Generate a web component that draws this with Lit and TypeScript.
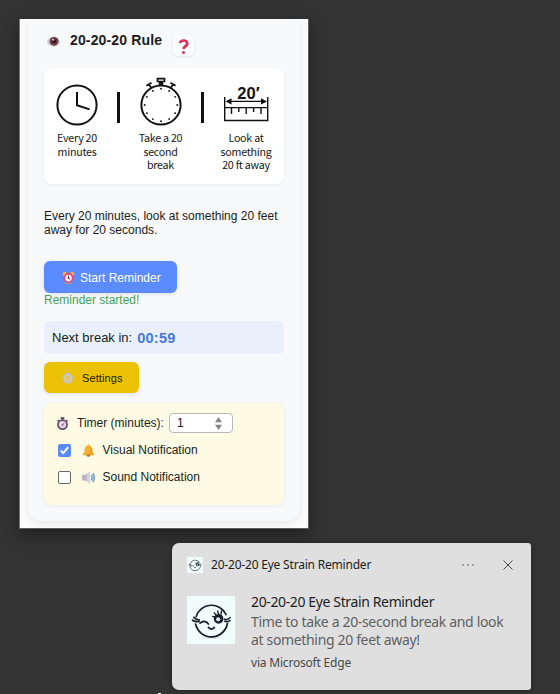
import { LitElement, html, css, svg } from "lit";
import { customElement, property, state } from "lit/decorators.js";

@customElement("wink-face")
class WinkFace extends LitElement {
  static styles = css`
    :host { display: block; flex: none; background: #f1fcfd; }
    svg { display: block; width: 100%; height: 100%; }
  `;
  render() {
    return html`<svg viewBox="0 0 48 48" fill="none" stroke="#17202a" stroke-width="1.7" stroke-linecap="round">
      <ellipse cx="24" cy="41.8" rx="10" ry=".6" fill="#c9d3d6" stroke="none" />
      <path d="M9.2 20.5A16 16 0 0 1 39 18.5M40.4 27.5A16.2 16.2 0 0 1 8.6 28" />
      <path d="M5.500 24.200q3 2 6.500 1.200M6.800 21.400q2.300 2.600 5.500 2.600" />
      <path d="M13 27.200q4.600-4 8.400.8" />
      <path d="M21.4 31.4q3 3.6 6 0" />
      <path d="M27.300 16.800l1.800 2.400M30.800 15l.5 3M34.600 15l-.6 3M25.600 20.400l2.200.8" stroke-width="1.4" />
      <circle cx="31.6" cy="22.8" r="3.700" stroke-width="2.300" fill="#17202a" />
      <circle cx="31.200" cy="23.300" r="2.100" fill="#dbe8ea" stroke="none" />
      <path d="M37.500 23.200q3 1.400 5.700-1.700M37.500 25.400q3 1 5.500-.8" stroke-width="1.500" />
    </svg>`;
  }
}

@customElement("rule-graphic")
class RuleGraphic extends LitElement {
  static styles = css`
    :host {
      display: grid; grid-template-columns: 66px 17px 67px 16px 72px; justify-content: start;
      height: 116px; box-sizing: border-box; background: #fff; border-radius: 8px;
      box-shadow: 0 1px 4px rgba(0, 0, 0, .06);
      font: 10.7px/13.6px "Noto Sans CJK JP", "Noto Sans", sans-serif; color: #161616;
    }
    .step { text-align: center; }
    .step svg { display: block; margin: 8px auto 0; width: 50px; height: 56px; }
    .step p { margin: -1px -6px 0; letter-spacing: -.25px; white-space: pre-line; }
    .bar { width: 3px; height: 31px; margin: 24px auto 0; background: #111; justify-self: center; }
  `;
  render() {
    const dots = Array.from({ length: 12 }, (_, i) => {
      const a = (i * Math.PI) / 6;
      return svg`<circle cx=${25 + 16.3 * Math.sin(a)} cy=${29 - 16.3 * Math.cos(a)} r=".95" fill="#111" stroke="none" />`;
    });
    return html`
      <div class="step">
        <svg viewBox="0 0 50 56" fill="none" stroke="#111" stroke-width="2">
          <circle cx="25" cy="29" r="19.6" /><path d="M25 16v13.2l12.6 4.2" />
        </svg>
        <p>Every 20\nminutes</p>
      </div>
      <div class="bar"></div>
      <div class="step">
        <svg viewBox="0 0 50 56" fill="none" stroke="#111" stroke-width="2">
          <circle cx="25" cy="29" r="19.6" />${dots}
          <path d="M21.500 2.700h7v2.800h-7z" stroke-width="1.700" /><path d="M25 6v4" stroke-width="4.500" />
          <path d="M10.500 9.800l5-3M12.500 7.800l2.500 3.800M39.500 9.800l-5-3M37.500 7.800l-2.500 3.800" stroke-width="1.900" />
        </svg>
        <p>Take a 20\nsecond\nbreak</p>
      </div>
      <div class="bar"></div>
      <div class="step">
        <svg viewBox="0 0 50 56" fill="none" stroke="#111" stroke-width="1.4">
          <text x="27.500" y="22.500" text-anchor="middle" font-family="Liberation Sans, sans-serif" font-weight="700" font-size="16.500" fill="#111" stroke="none">20′</text>
          <path d="M3.7 21v23.5h43V21" /><path d="M3.7 31.6h43M6 25.4h38" />
          <path d="M4.5 25.4l6-3.2v6.4zM46 25.4l-6-3.2v6.4z" fill="#111" stroke="none" />
          <path d="M10.5 32v6M17.8 32v4M25.2 32v6M32.6 32v4M40 32v6" />
        </svg>
        <p>Look at\nsomething\n20 ft away</p>
      </div>`;
  }
}

@customElement("emoji-icon")
class EmojiIcon extends LitElement {
  @property() name = "";
  static styles = css`
    :host { display: block; width: 14px; height: 14px; flex: none; }
    svg { display: block; width: 100%; height: 100%; }
  `;
  render() {
    const art: Record<string, unknown> = {
      eye: svg`<path d="M0 8Q2 2.500 7 2.500T14 8Q12 13 7 13T0 8z" fill="#cbc6d2"/><circle cx="7.600" cy="7.300" r="4.700" fill="#6d3c44"/><circle cx="7.600" cy="7.300" r="2.200" fill="#28151d"/><circle cx="6.600" cy="5.600" r="1.100" fill="#e8d9df"/>`,
      question: svg`<path d="M3.7 3.8Q4.2 1.4 7.2 1.4T10.6 4.3Q10.6 5.8 8.8 6.8T7.2 9.4" fill="none" stroke="#dc3158" stroke-width="2.5"/><circle cx="7" cy="12.6" r="1.4" fill="#dc3158"/>`,
      alarm: svg`<circle cx="3" cy="3" r="2.3" fill="#edae45"/><circle cx="11" cy="3" r="2.3" fill="#edae45"/><path d="M3 13.3h8" stroke="#c98fa8" stroke-width="1.3"/><circle cx="7" cy="7.6" r="5.4" fill="#df4770"/><circle cx="7" cy="7.6" r="3.6" fill="#f4eaf2"/><path d="M7 5.2v2.6l1.4 1" fill="none" stroke="#4a3550" stroke-width="1.1"/>`,
      gear: svg`<circle cx="7" cy="7.4" r="5.4" fill="none" stroke="#c9bda9" stroke-width="2.2" stroke-dasharray="2.1 .65"/><circle cx="7" cy="7.4" r="4" fill="none" stroke="#cfc9c3" stroke-width="2.8"/><circle cx="7.6" cy="7" r="2.5" fill="#d9c48a"/>`,
      timer: svg`<path d="M5 1.2h4M7 1v3M11 3.4l1.2 1M3 3.4l-1.2 1" stroke="#51405d" stroke-width="1.7"/><circle cx="7" cy="8.2" r="4.9" fill="#e7d7e8" stroke="#65506f" stroke-width="1.9"/><path d="M7 8.6l2-2.4" stroke="#c4477e" stroke-width="1"/><circle cx="7" cy="8.6" r=".9" fill="#65506f"/>`,
      bell: svg`<path d="M7 .6c1 0 1.3.6 1.3 1.3 2.2.7 3 2.5 3 4.6 0 2.3.7 3.2 2 4.3v1.3H.7v-1.3c1.3-1.1 2-2 2-4.3 0-2.1.8-3.9 3-4.6C5.7 1.2 6 .6 7 .6z" fill="#f6b032"/><path d="M8 2c2 1 2.6 2.7 2.6 4.8 0 2 .8 3.2 2.2 4.3H9z" fill="#ee9d2b"/><ellipse cx="7" cy="12.4" rx="2" ry="1.3" fill="#b9772f"/>`,
      speaker: svg`<path d="M0 4h3.400L8.600.6v13L3.400 10.200H0z" fill="#b9b5c6"/><path d="M5.2 2.800L8.600.6v13L5.200 11.400z" fill="#d6d2e0"/><path d="M10 4.3q1.7 2.8 0 5.8M11.7 2.4q3 4.6 0 9.4" fill="none" stroke="#6fa4dc" stroke-width="1.8"/>`,
    };
    return html`<svg viewBox="0 0 14 14">${art[this.name]}</svg>`;
  }
}

@customElement("reminder-popup")
class ReminderPopup extends LitElement {
  @state() minutes = 1;
  @state() visual = true;
  @state() sound = false;
  static styles = css`
    :host {
      display: block; box-sizing: border-box; width: 290px; height: 510px; padding: 0 8px;
      overflow: hidden; background: #fcfcfd; border: 1px solid #606060; border-top-width: 0;
      border-left-color: #777;
      font: 12px/14px "Liberation Sans", Arial, sans-serif; color: #1b1d20;
    }
    .card {
      box-sizing: border-box; height: 502px; padding: 13px 16px 0; width: 272px;
      background: #f7f9fb; border-radius: 0 0 14px 14px; box-shadow: 0 2px 8px rgba(0, 0, 0, .09);
    }
    .head { display: flex; height: 36px; }
    .head emoji-icon { width: 13px; height: 14px; margin: 2px 10px 0 3px; }
    h1 { margin: 0; font-size: 14px; line-height: 16px; width: 93px; letter-spacing: .15px; white-space: nowrap; }
    .help {
      display: grid; place-items: center; width: 21px; height: 21px; margin: 3px 0 0 10px;
      border: 0; padding: 0; border-radius: 5px; background: #fbfcfd; box-shadow: 0 1px 3px rgba(0, 0, 0, .09);
    }
    .head .help emoji-icon { width: 15px; height: 15px; margin: 2px 0 0; }
    .intro { margin: 25px 0 24px; white-space: nowrap; }
    button { font: inherit; }
    .start, .settings { display: flex; align-items: center; border: 0; border-radius: 6px; box-shadow: 0 1px 4px rgba(0, 0, 0, .12); }
    .start { width: 133px; height: 32px; padding: 1px 0 0 18px; background: #5b8cff; color: #fff; gap: 5px; white-space: nowrap; }
    .start emoji-icon { width: 13px; height: 13px; }
    .status { color: #43a257; line-height: 14px; height: 28px; }
    .next {
      display: flex; align-items: center; box-sizing: border-box; width: 240px; height: 33px; padding: 1px 8px 0;
      border-radius: 5px; background: #e9f0fb; font-size: 13px; gap: 5px; white-space: nowrap;
    }
    .next b { font-size: 14.6px; color: #447add; letter-spacing: .2px; }
    .settings { width: 95px; height: 31px; margin: 8px 0 10px; padding: 0 0 0 18px; gap: 8px; background: #ebc204; color: #24200d; font-size: 11px; letter-spacing: .1px; }
    .settings emoji-icon { width: 12px; height: 12px; }
    .panel {
      box-sizing: border-box; width: 240px; height: 102px; padding: 10px 13px 0 12px; border-radius: 8px;
      background: #fdfbe3; box-shadow: 0 1px 4px rgba(0, 0, 0, .07);
    }
    .row { display: flex; align-items: center; height: 20px; white-space: nowrap; }
    .row + .row { margin-top: 7px; }
    .row .lead { width: 13px; height: 13px; margin-right: 8px; }
    .stepper {
      display: flex; align-items: center; justify-content: space-between; box-sizing: border-box;
      width: 64px; height: 20px; margin-left: 5px; padding: 0 10px 0 7px; border: 1px solid #b9b9b9;
      border-radius: 4px; background: #fff; color: #111;
    }
    .stepper svg { width: 7px; height: 13px; }
    .box {
      box-sizing: border-box; width: 13px; height: 13px; margin: 1px 11px 0 2px; border: 1px solid #686868;
      border-radius: 2px; background: #fff;
    }
    .box.on { border-color: #5b8cff; background: #5b8cff; }
    .box svg { display: block; width: 11px; height: 11px; }
    .row .kind { width: 13px; height: 13px; margin: 1px 7.5px 0 0; }
  `;
  private check(on: boolean, icon: string, label: string) {
    return html`<div class="row">
      <span class="box ${on ? "on" : ""}" role="checkbox" aria-checked=${on}>
        ${on ? html`<svg viewBox="0 0 11 11"><path d="M1.7 5.7l2.5 2.5 5-6" fill="none" stroke="#fff" stroke-width="1.9" /></svg>` : ""}
      </span>
      <emoji-icon class="kind" name=${icon}></emoji-icon><span>${label}</span>
    </div>`;
  }
  render() {
    return html`<div class="card">
      <div class="head">
        <emoji-icon name="eye"></emoji-icon>
        <h1>20-20-20 Rule</h1>
        <button class="help"><emoji-icon name="question"></emoji-icon></button>
      </div>
      <rule-graphic></rule-graphic>
      <p class="intro">Every 20 minutes, look at something 20 feet<br />away for 20 seconds.</p>
      <button class="start"><emoji-icon name="alarm"></emoji-icon>Start Reminder</button>
      <div class="status">Reminder started!</div>
      <div class="next"><span>Next break in:</span><b>00:59</b></div>
      <button class="settings"><emoji-icon name="gear"></emoji-icon>Settings</button>
      <div class="panel">
        <div class="row">
          <emoji-icon class="lead" name="timer"></emoji-icon><span>Timer (minutes):</span>
          <span class="stepper">${this.minutes}
            <svg viewBox="0 0 7 13" fill="#858585"><path d="M3.5 0L7 5.2H0zM3.5 13L7 7.8H0z" /></svg>
          </span>
        </div>
        ${this.check(this.visual, "bell", "Visual Notification")}
        ${this.check(this.sound, "speaker", "Sound Notification")}
      </div>
    </div>`;
  }
}

@customElement("toast-card")
class ToastCard extends LitElement {
  static styles = css`
    :host {
      display: block; box-sizing: border-box; width: 359px; height: 147px; padding: 14px 15px 0;
      background: #dfdfdf; border-radius: 7px 3px 3px 7px; box-shadow: 0 0 5px rgba(0, 0, 0, .35);
      font: 14px/18px "Noto Sans", sans-serif; color: #1d1d1d; white-space: nowrap;
    }
    .top { display: flex; align-items: center; height: 16px; font-size: 12px; }
    .top wink-face { width: 16px; height: 16px; margin-right: 8px; }
    .app { flex: 1; letter-spacing: -.2px; }
    .more { width: 12px; height: 2px; margin-right: 29px; }
    .close { width: 10px; height: 10px; margin-right: 3px; }
    .body { display: flex; gap: 16px; margin-top: 20px; }
    .body wink-face { width: 48px; height: 48px; margin-top: 3px; }
    p { margin: 0; }
    .title { line-height: 18px; letter-spacing: -.37px; }
    .text { line-height: 18px; letter-spacing: -.34px; color: #5f5f5f; margin-top: 2px; }
    .via { font-size: 12px; line-height: 16px; letter-spacing: -.2px; margin-top: 6px; color: #484848; }
  `;
  render() {
    return html`
      <div class="top">
        <wink-face></wink-face><span class="app">20-20-20 Eye Strain Reminder</span>
        <svg class="more" viewBox="0 0 12 2" fill="#555"><circle cx="1" cy="1" r=".8" /><circle cx="6" cy="1" r=".8" /><circle cx="11" cy="1" r=".8" /></svg>
        <svg class="close" viewBox="0 0 10 10" stroke="#484848"><path d="M.5 .5l9 9M9.5 .5l-9 9" /></svg>
      </div>
      <div class="body">
        <wink-face></wink-face>
        <div>
          <p class="title">20-20-20 Eye Strain Reminder</p>
          <p class="text">Time to take a 20-second break and look<br />at something 20 feet away!</p>
          <p class="via">via Microsoft Edge</p>
        </div>
      </div>`;
  }
}

@customElement("app-root")
class AppRoot extends LitElement {
  static styles = css`
    :host { display: block; position: relative; width: 560px; height: 694px; overflow: hidden; background: #333; }
    reminder-popup { position: absolute; left: 19px; top: 19px; box-shadow: 0 6px 16px rgba(0, 0, 0, .4); }
    toast-card { position: absolute; left: 172px; top: 543px; }
    .sliver { position: absolute; left: 158px; bottom: 0; width: 3px; height: 1px; background: #fff; }
  `;
  render() {
    return html`<reminder-popup></reminder-popup><toast-card></toast-card><div class="sliver"></div>`;
  }
}
